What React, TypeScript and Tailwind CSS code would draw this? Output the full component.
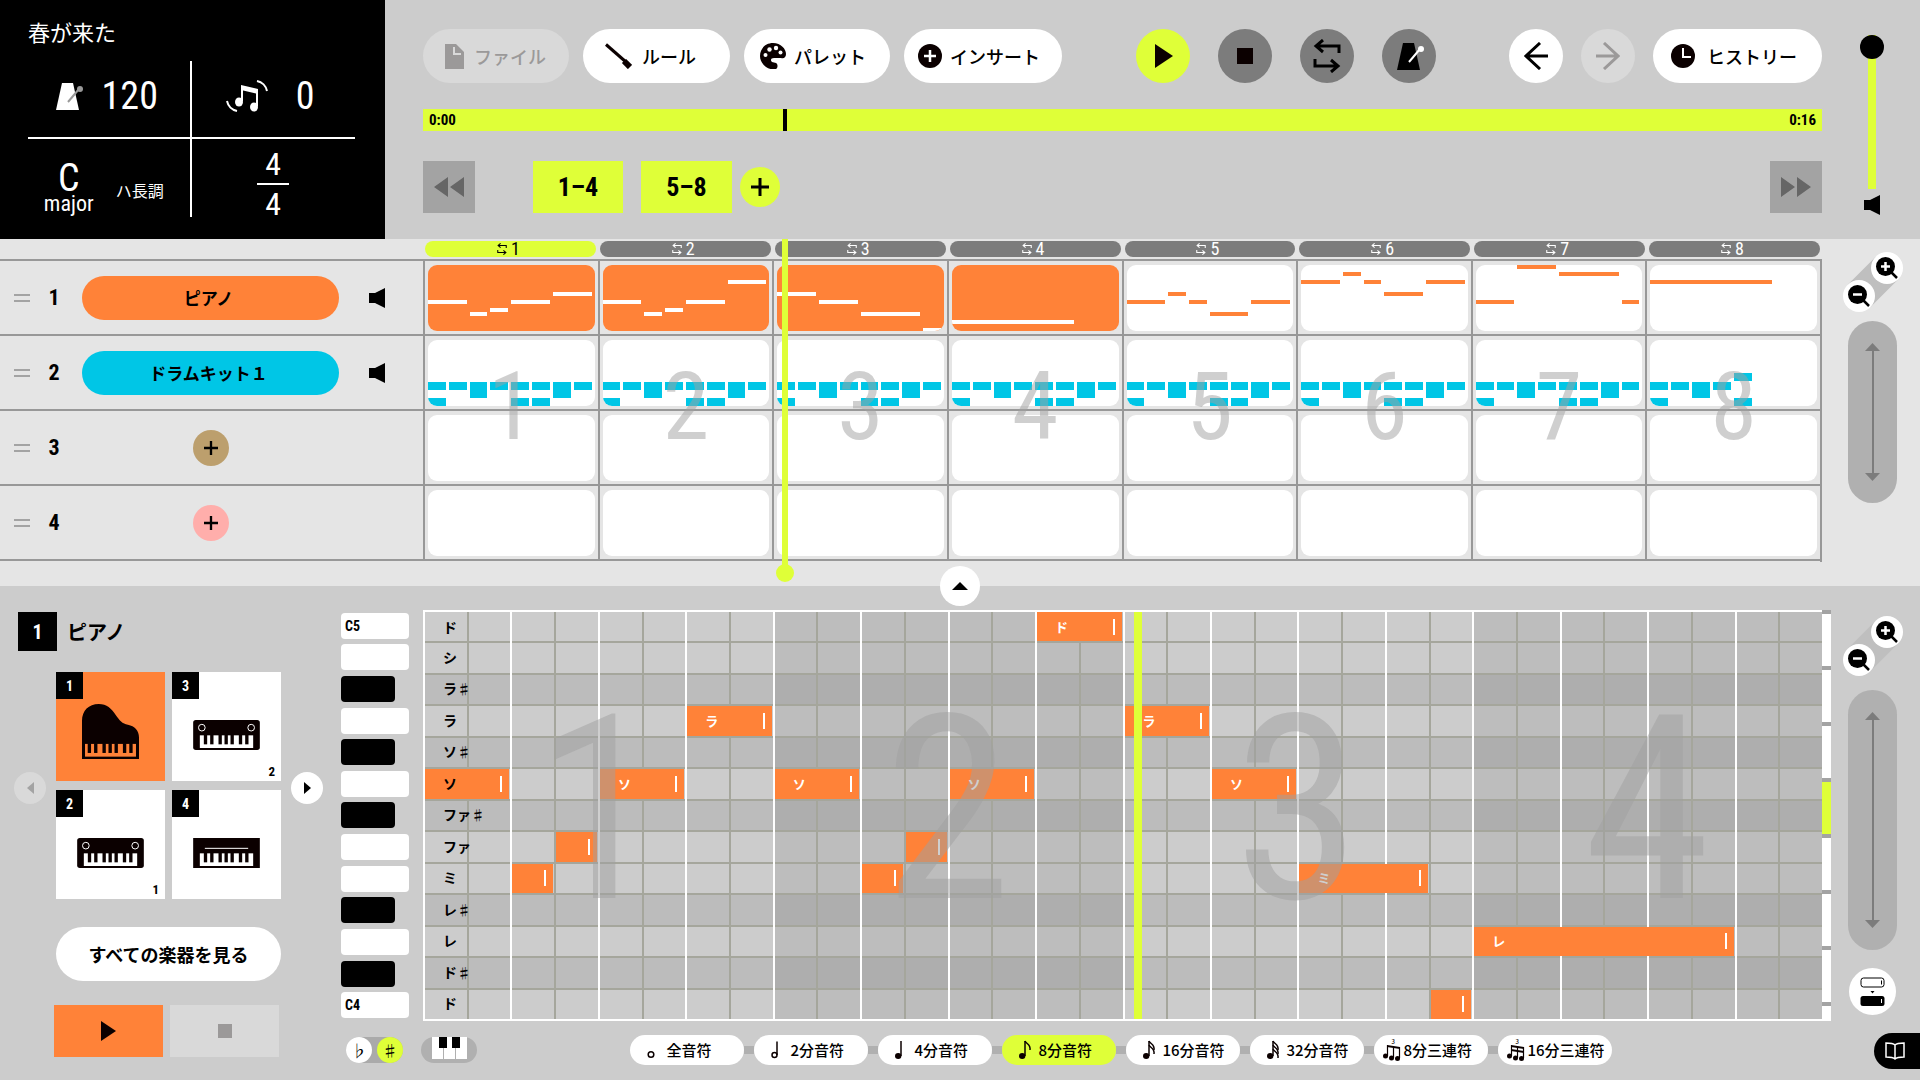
import { Fragment, type ReactNode } from "react";

const CJK = "font-['Noto_Sans_CJK_JP',sans-serif]";
const NUM = "font-['Liberation_Sans_Narrow','Roboto_Condensed','Noto_Sans_CJK_JP',sans-serif]";

/* ---------- icons ---------- */

function Loop({ className, w = 3 }: { className: string; w?: number }) {
  return (
    <svg viewBox="0 0 28 34" className={className} fill="none" stroke="currentColor" strokeWidth={w} aria-hidden="true">
      <path d="M26 14V7H3M10 1 3 7l7 6M2 20v7h23M18 21l7 6-7 6" />
    </svg>
  );
}

function Metronome({ className, stick }: { className: string; stick: string }) {
  return (
    <svg viewBox="0 0 28 27" className={className} aria-hidden="true">
      <path d="M6 0h11l6 27H0Z" fill="currentColor" />
      <path d="M12 19 23 6" stroke={stick} strokeWidth="2" />
      <circle cx="24" cy="6" r="3" fill={stick} />
    </svg>
  );
}

function MusicShake() {
  return (
    <svg viewBox="0 0 42 32" className="h-8 w-[42px]" fill="none" stroke="currentColor" strokeWidth="2" aria-hidden="true">
      <path d="M16 6v15M31 10v16" />
      <path d="M15 5 32 9v5L15 10Z" fill="currentColor" stroke="none" />
      <ellipse cx="13" cy="22" rx="4" ry="4.5" fill="currentColor" stroke="none" />
      <ellipse cx="28" cy="27" rx="4" ry="4.5" fill="currentColor" stroke="none" />
      <path d="M31 1c5 1 9 5 10 10M1 21c1 5 5 9 10 10" />
    </svg>
  );
}

function FileIcon() {
  return (
    <svg viewBox="0 0 19 25" className="h-[25px] w-[19px]" aria-hidden="true">
      <path d="M0 0h11l8 8v17H0Z" fill="#9b9999" />
      <path d="M9 3v7h7" fill="none" stroke="#d9d9d9" strokeWidth="2" />
    </svg>
  );
}

function Baton() {
  return (
    <svg viewBox="0 0 27 26" className="h-[26px] w-[27px]" stroke="#0b0000" aria-hidden="true">
      <path d="M1 1.500 21 19" strokeWidth="3" />
      <path d="m19 18 6 6" strokeWidth="6" />
    </svg>
  );
}

function Palette() {
  return (
    <svg viewBox="0 0 26 26" className="h-[26px] w-[26px]" aria-hidden="true">
      <path d="M13 0c8 0 13 6 13 11 0 3-2 5-5 4h-7c-3 0-4 2-2 4l4 1c2 1 2 5 0 6-3 1-7 0-10-2-4-3-6-7-6-11C0 5 6 0 13 0Z" fill="#0b0000" />
      <g fill="#fff">
        <circle cx="5.500" cy="12" r="2" />
        <circle cx="9.500" cy="6.500" r="2.200" />
        <circle cx="16" cy="5" r="2.200" />
        <circle cx="20.500" cy="9.500" r="2" />
      </g>
    </svg>
  );
}

function PlusDisc() {
  return (
    <svg viewBox="0 0 24 24" className="size-6" aria-hidden="true">
      <circle cx="12" cy="12" r="12" fill="#0b0000" />
      <path d="M12 6v12M6 12h12" stroke="#fff" strokeWidth="2.500" />
    </svg>
  );
}

function Clock() {
  return (
    <svg viewBox="0 0 24 24" className="size-6" aria-hidden="true">
      <circle cx="12" cy="12" r="12" fill="#0b0000" />
      <path d="M12 4v9h8" stroke="#fff" strokeWidth="2" fill="none" />
    </svg>
  );
}

function Arrow({ flip = false }: { flip?: boolean }) {
  return (
    <svg viewBox="0 0 24 28" className={flip ? "h-7 w-6 -scale-x-100" : "h-7 w-6"} fill="none" stroke="currentColor" strokeWidth="3" aria-hidden="true">
      <path d="M24 14H2M16 1 2 14l14 13" />
    </svg>
  );
}

function Triangle({ className, d = "M0 0v24l18-12Z", box = "0 0 18 24" }: { className: string; d?: string; box?: string }) {
  return (
    <svg viewBox={box} className={className} fill="currentColor" aria-hidden="true">
      <path d={d} />
    </svg>
  );
}

function Speaker({ className }: { className: string }) {
  return (
    <svg viewBox="0 0 16 20" className={className} fill="currentColor" aria-hidden="true">
      <path d="M0 5h6l10-5v20L6 15H0Z" />
    </svg>
  );
}

function Plus({ className }: { className: string }) {
  return (
    <svg viewBox="0 0 18 18" className={className} stroke="currentColor" strokeWidth="3" aria-hidden="true">
      <path d="M9 0v18M0 9h18" />
    </svg>
  );
}

function Magnifier({ plus = false }: { plus?: boolean }) {
  return (
    <svg viewBox="0 0 22 22" className="size-[22px]" aria-hidden="true">
      <circle cx="9.500" cy="9.500" r="9.500" fill="#000" />
      <path d="m14 14 7 7" stroke="#000" strokeWidth="2.500" />
      <path d={plus ? "M9.500 5v9M5 9.500h9" : "M5 9.500h9"} stroke="#fff" strokeWidth="2.500" />
    </svg>
  );
}

const BLACK_KEYS = [32, 51, 76, 94, 112, 137, 156];

function Synth({ knobs = false }: { knobs?: boolean }) {
  return (
    <svg viewBox="0 0 200 90" className="h-[30px] w-[67px]" aria-hidden="true">
      <rect width="200" height="90" rx={knobs ? 8 : 0} fill="#0b0000" />
      {knobs ? (
        <g fill="none" stroke="#fff" strokeWidth="3">
          <circle cx="26" cy="23" r="10" />
          <circle cx="174" cy="23" r="10" />
        </g>
      ) : (
        <path d="M35 31h130" stroke="#fff" strokeWidth="3" />
      )}
      <rect x="20" y="46" width="160" height="38" fill="#fff" />
      {BLACK_KEYS.map((x) => (
        <rect key={x} x={x} y="44" width="10" height="29" fill="#0b0000" />
      ))}
    </svg>
  );
}

function GrandPiano() {
  return (
    <svg viewBox="0 0 170 164" className="h-[55px] w-[57px]" aria-hidden="true">
      <path d="M0 164V50C0 20 20 0 50 0c24 0 38 14 50 32 12 17 20 27 37 30 20 4 33 18 33 38v64Z" fill="#0b0000" />
      <rect x="9" y="119" width="152" height="38" fill="#ff8238" />
      {BLACK_KEYS.map((x) => (
        <rect key={x} x={x - 15} y="117" width="10" height="29" fill="#0b0000" />
      ))}
    </svg>
  );
}

function NoteGlyph({ kind }: { kind: number }) {
  if (kind >= 6) {
    return (
      <svg viewBox="0 0 18 22" className="h-[22px] w-[18px] shrink-0 overflow-visible" aria-hidden="true">
        <g fill="#0b0000">
          <circle cx="2.500" cy="17" r="2.500" />
          <circle cx="8.500" cy="19" r="2.500" />
          <circle cx="14.500" cy="19.500" r="2.500" />
          <path d="m4 6 13 2v2L4 8Z" />
          {kind === 7 && <path d="m4 10 13 2v2L4 12Z" />}
        </g>
        <path d="M4.500 6v11M10.500 7v12M16.500 8v11" stroke="#0b0000" strokeWidth="1.200" />
        <text x="8.500" y="5" fontSize="6" fill="#0b0000">3</text>
      </svg>
    );
  }
  return (
    <svg viewBox="0 0 24 22" className="h-[22px] w-6 shrink-0" fill="none" stroke="#0b0000" strokeWidth="1.500" aria-hidden="true">
      {kind === 0 && <circle cx="11" cy="15.500" r="2.800" />}
      {kind === 1 && <path d="M13 2.500V16" />}
      {kind === 1 && <circle cx="10.500" cy="16" r="2.500" />}
      {kind >= 2 && <path d="M13 2v15" />}
      {kind >= 2 && <ellipse cx="10.200" cy="17" rx="3.200" ry="3" fill="#0b0000" stroke="none" />}
      {kind >= 3 && <path d="M13 2c1 3 6 3 5 9" />}
      {kind >= 4 && <path d="M13 6c1 3 6 3 5 9" />}
      {kind >= 5 && <path d="M13 10c1 3 6 3 5 9" />}
    </svg>
  );
}

/* ---------- data ---------- */

type Note = [start: number, length: number, semitone: number];

const MELODY: Note[][] = [
  [[0, 2, 7], [2, 1, 4], [3, 1, 5], [4, 2, 7], [6, 2, 9]],
  [[0, 2, 7], [2, 1, 4], [3, 1, 5], [4, 2, 7], [6, 2, 12]],
  [[0, 2, 9], [2, 2, 7], [4, 3, 4], [7, 1, 0]],
  [[0, 6, 2]],
  [[0, 2, 7], [2, 1, 9], [3, 1, 7], [4, 2, 4], [6, 2, 7]],
  [[0, 2, 12], [2, 1, 14], [3, 1, 12], [4, 2, 9], [6, 2, 12]],
  [[0, 2, 7], [2, 2, 16], [4, 3, 14], [7, 1, 7]],
  [[0, 6, 12]],
];

// [slot, top, height] in a drum cell
const BEAT: [number, number, number][] = [
  [0, 42, 8], [1, 42, 8], [2, 42, 16], [3, 42, 8], [4, 42, 8], [5, 42, 8], [6, 42, 16], [7, 42, 8],
  [0, 58, 8], [4, 58, 8], [5, 58, 8],
];
const LAST_BEAT: [number, number, number][] = [
  [0, 42, 8], [1, 42, 8], [2, 42, 16], [3, 42, 8], [4, 33, 8], [0, 58, 8], [4, 58, 8],
];

const SCALE = ["ド", "シ", "ラ♯", "ラ", "ソ♯", "ソ", "ファ♯", "ファ", "ミ", "レ♯", "レ", "ド♯", "ド"];
const LENGTHS = ["全音符", "2分音符", "4分音符", "8分音符", "16分音符", "32分音符", "8分三連符", "16分三連符"];
const TRACKS = [
  { name: "ピアノ", color: "bg-[#ff8238]" },
  { name: "ドラムキット１", color: "bg-[#00c6e6]" },
  { color: "bg-[#bc9f6d]" },
  { color: "bg-[#ffaeab]" },
];

/* ---------- pieces ---------- */

function Pill({ children, className = "bg-white", disabled = false }: { children: ReactNode; className?: string; disabled?: boolean }) {
  return (
    <button disabled={disabled} className={`flex h-[54px] items-center rounded-full text-lg font-medium whitespace-nowrap ${className}`}>
      {children}
    </button>
  );
}

function Round({ children, label, className, disabled = false }: { children: ReactNode; label: string; className: string; disabled?: boolean }) {
  return (
    <button aria-label={label} disabled={disabled} className={`flex shrink-0 items-center justify-center rounded-full ${className}`}>
      {children}
    </button>
  );
}

function ZoomPair({ target }: { target: string }) {
  return (
    <div className="relative h-[60px] w-[60px]">
      <svg viewBox="0 0 60 60" className="absolute inset-0" aria-hidden="true">
        <path d="M16 44 44 16" stroke="#bfbfbf" strokeWidth="32" />
      </svg>
      <Round label={`${target}を拡大`} className="absolute top-0 right-0 size-8 bg-white"><Magnifier plus /></Round>
      <Round label={`${target}を縮小`} className="absolute bottom-0 left-0 size-8 bg-white"><Magnifier /></Round>
    </div>
  );
}

function ScrollPill({ className }: { className: string }) {
  return (
    <div className={`flex w-[49px] flex-col items-center rounded-full bg-[#b0b0b0] py-[22px] text-[#7c7c7c] ${className}`}>
      <Triangle className="h-2 w-[15px]" box="0 0 15 8" d="M7.500 0 15 8H0Z" />
      <div className="w-[2px] flex-1 bg-current" />
      <Triangle className="h-2 w-[15px]" box="0 0 15 8" d="M0 0h15L7.500 8Z" />
    </div>
  );
}

function Header() {
  return (
    <header className="flex bg-[#ccc]">
      <section className="w-[385px] shrink-0 bg-black pt-[14px] pr-[30px] pb-[22px] pl-7 text-white">
        <h1 className="text-[22px] leading-[34px]">春が来た</h1>
        <div className={`mt-[13px] grid grid-cols-2 grid-rows-[78px_78px] ${NUM}`}>
          <div className="flex items-center justify-center gap-[18px] border-r-2 border-b-2 border-white pr-1 pb-[6px]">
            <Metronome className="h-[27px] w-7" stick="#999" />
            <span className="text-[38px] leading-8">120</span>
          </div>
          <div className="flex items-center justify-center gap-7 border-b-2 border-white pr-[6px] pb-[6px]">
            <MusicShake />
            <span className="text-[38px] leading-8">0</span>
          </div>
          <div className="flex items-center justify-center gap-[22px] border-r-2 border-white pt-6 pr-[10px]">
            <div className="flex flex-col items-center">
              <span className="text-[38px] leading-7">C</span>
              <span className="text-[22px] leading-6">major</span>
            </div>
            <span className={`text-base ${CJK}`}>ハ長調</span>
          </div>
          <div className="flex flex-col items-center justify-center pt-3 text-[32px] leading-[38px]">
            <span>4</span>
            <div className="h-[2px] w-8 shrink-0 bg-white" />
            <span>4</span>
          </div>
        </div>
      </section>

      <div className="flex min-w-0 flex-1 flex-col pt-[29px] pl-[38px]">
        <div className="flex items-center justify-between">
          <div className="flex gap-[14px]">
            <Pill disabled className="w-[146px] gap-[10px] bg-[#d9d9d9] pl-[22px] text-[#9b9999]"><FileIcon />ファイル</Pill>
            <Pill className="w-[147px] gap-[10px] bg-white pl-[22px]"><Baton />ルール</Pill>
            <Pill className="w-[146px] gap-2 bg-white pl-4"><Palette />パレット</Pill>
            <Pill className="w-[158px] gap-2 bg-white pl-[14px]"><PlusDisc />インサート</Pill>
          </div>
          <div className="flex gap-7">
            <Round label="再生" className="size-[54px] bg-[#dfff38] pl-[2px] text-[#0b0000]"><Triangle className="h-6 w-[18px]" /></Round>
            <Round label="停止" className="size-[54px] bg-[#7c7c7c]"><span className="size-4 bg-[#0b0000]" /></Round>
            <Round label="ループ" className="size-[54px] bg-[#7c7c7c]"><Loop className="h-[34px] w-7" /></Round>
            <Round label="メトロノーム" className="size-[54px] bg-[#7c7c7c] pl-1"><Metronome className="h-[27px] w-7" stick="#fff" /></Round>
          </div>
          <div className="flex gap-[18px]">
            <Round label="元に戻す" className="size-[54px] bg-white"><Arrow /></Round>
            <Round label="やり直す" disabled className="size-[54px] bg-[#d9d9d9] text-[#9b9999]"><Arrow flip /></Round>
            <Pill className="w-[169px] gap-3 bg-white pl-[18px]"><Clock />ヒストリー</Pill>
          </div>
        </div>

        <div className="relative mt-[26px] h-[22px]">
          <input
            type="range"
            aria-label="再生位置"
            max={1000}
            defaultValue={258}
            className="block h-[22px] w-full appearance-none bg-[#dfff38] [&::-webkit-slider-thumb]:h-[22px] [&::-webkit-slider-thumb]:w-1 [&::-webkit-slider-thumb]:appearance-none [&::-webkit-slider-thumb]:bg-black"
          />
          <div className={`pointer-events-none absolute inset-0 flex items-center justify-between px-[6px] text-[15px] leading-5 font-bold ${NUM}`}>
            <span>0:00</span>
            <span>0:16</span>
          </div>
        </div>

        <div className="mt-[30px] flex items-center">
          <button aria-label="前へ" className="flex h-[52px] w-[52px] items-center justify-center bg-[#a3a3a3] text-[#666]">
            <Triangle className="h-5 w-[30px]" box="0 0 30 20" d="M14 0v20L0 10ZM30 0v20L16 10Z" />
          </button>
          <div className={`ml-[58px] flex items-center text-[26px] font-bold ${NUM}`}>
            <button className="h-[52px] w-[90px] bg-[#dfff38]">1–4</button>
            <button className="ml-[18px] h-[52px] w-[91px] bg-[#dfff38]">5–8</button>
            <Round label="セクションを追加" className="ml-2 size-10 bg-[#dfff38]"><Plus className="size-[18px]" /></Round>
          </div>
          <button aria-label="次へ" className="ml-auto flex h-[52px] w-[52px] items-center justify-center bg-[#a3a3a3] text-[#666]">
            <Triangle className="h-5 w-[30px]" box="0 0 30 20" d="M0 0v20l14-10ZM16 0v20l14-10Z" />
          </button>
        </div>
      </div>

      <div className="flex w-[98px] shrink-0 flex-col items-center pt-[35px] pl-[2px]">
        <input
          type="range"
          aria-label="音量"
          defaultValue={100}
          className="h-[154px] w-6 appearance-none bg-[linear-gradient(#dfff38,#dfff38)] bg-[length:8px_100%] bg-center bg-no-repeat [direction:rtl] [writing-mode:vertical-lr] [&::-webkit-slider-thumb]:size-6 [&::-webkit-slider-thumb]:appearance-none [&::-webkit-slider-thumb]:rounded-full [&::-webkit-slider-thumb]:bg-black"
        />
        <Speaker className="mt-[6px] h-5 w-4" />
      </div>
    </header>
  );
}

function Cell({ bar, track }: { bar: number; track: number }) {
  const filled = track === 0 && bar < 4;
  return (
    <div className="h-[75px] border-b-2 border-[#989898] px-[3px] pt-1">
      <div className={`relative h-[66px] overflow-hidden rounded-[9px] ${filled ? "bg-[#ff8238]" : "bg-white"}`}>
        {track === 0 &&
          MELODY[bar].map(([start, len, semi]) => (
            <div
              key={start}
              className={`absolute h-1 ${filled ? "bg-white" : "bg-[#ff8238]"}`}
              style={{ left: `${start * 12.5}%`, width: `calc(${len * 12.5}% - 3px)`, top: Math.max(0, 63 - semi * 4) }}
            />
          ))}
        {track === 1 &&
          (bar === 7 ? LAST_BEAT : BEAT).map(([slot, top, height]) => (
            <div key={`${slot}-${top}`} className="absolute bg-[#00c6e6]" style={{ left: `${slot * 12.5}%`, width: "calc(12.5% - 3px)", top, height }} />
          ))}
      </div>
    </div>
  );
}

function Arrangement() {
  return (
    <section className="relative flex bg-[#e5e5e5] pb-6">
      <div className="w-[423px] shrink-0">
        <div className="h-[22px] border-b-2 border-[#989898]" />
        {TRACKS.map((t, i) => (
          <div key={i} className="flex h-[75px] items-center border-b-2 border-[#989898] pl-[14px]">
            <div className="h-2 w-4 border-y-2 border-[#a3a3a3]" />
            <span className={`w-12 text-center text-[22px] font-bold ${NUM}`}>{i + 1}</span>
            <div className="ml-1 flex w-[257px] justify-center">
              {t.name ? (
                <button className={`h-11 w-full rounded-full pr-1 text-[17px] font-bold ${t.color}`}>{t.name}</button>
              ) : (
                <Round label={`トラック${i + 1}を追加`} className={`size-9 ${t.color}`}><Plus className="size-[14px]" /></Round>
              )}
            </div>
            {t.name && (
              <button aria-label={`${t.name}をミュート`} className="ml-[30px]"><Speaker className="h-5 w-4" /></button>
            )}
          </div>
        ))}
      </div>

      <div className="relative min-w-0 flex-1">
        <div className="grid h-[22px] grid-cols-8 border-b-2 border-[#989898] pt-[2px]">
          {MELODY.map((_, i) => (
            <button
              key={i}
              className={`mr-[2px] ml-[2px] flex h-4 items-center justify-center gap-1 rounded-full pr-1 text-lg leading-4 ${NUM} ${i === 0 ? "bg-[#dfff38]" : "bg-[#7c7c7c] text-white"}`}
            >
              <Loop className="h-3 w-[10px]" />
              {i + 1}
            </button>
          ))}
        </div>
        <div className="grid grid-cols-8 border-r-2 border-[#989898] pb-[1px]">
          {MELODY.map((_, bar) => (
            <div key={bar} className="relative border-l-2 border-[#989898]">
              {TRACKS.map((_, t) => (
                <Cell key={t} bar={bar} track={t} />
              ))}
              <div className={`pointer-events-none absolute inset-x-0 top-24 text-center text-[94px] leading-[100px] text-[#a0a0a0]/50 ${NUM}`}>{bar + 1}</div>
            </div>
          ))}
        </div>
        <div className="absolute top-0 -bottom-5 left-[25.900%] flex w-[18px] -translate-x-[9px] flex-col items-center">
          <div className="w-[6px] flex-1 bg-[#dfff38]" />
          <div className="-mt-1 size-[18px] rounded-full bg-[#dfff38]" />
        </div>
      </div>

      <div className="flex w-[98px] shrink-0 flex-col items-center pt-[13px] pl-[3px]">
        <ZoomPair target="トラック" />
        <ScrollPill className="mt-[9px] h-[182px]" />
      </div>

      <div className="absolute inset-x-0 -bottom-5 z-10 flex justify-center">
        <Round label="折りたたむ" className="size-10 bg-white"><Triangle className="h-2 w-4" box="0 0 16 8" d="M8 0l8 8H0Z" /></Round>
      </div>
    </section>
  );
}

function Instruments() {
  const tiles = [1, 3, 2, 4];
  return (
    <aside className="w-[341px] shrink-0 pt-[26px]">
      <div className="flex items-center gap-[10px] pl-[18px]">
        <div className={`flex size-[39px] items-center justify-center bg-black text-xl font-bold text-white ${NUM}`}>1</div>
        <h2 className="text-xl font-bold">ピアノ</h2>
      </div>
      <div className="mt-[21px] flex items-center pl-[14px]">
        <Round label="前の楽器" disabled className="mt-1 size-8 bg-[#d9d9d9] text-[#a3a3a3]"><Triangle className="h-3 w-[7px] -scale-x-100" box="0 0 7 12" d="M0 0v12l7-6Z" /></Round>
        <div className="ml-[10px] grid grid-cols-2 gap-x-[7px] gap-y-[9px]">
          {tiles.map((n) => (
            <button key={n} className={`relative flex size-[109px] items-center justify-center ${n === 1 ? "bg-[#ff8238] pt-[10px]" : "bg-white pt-4"}`}>
              <span className={`absolute top-0 left-0 flex size-[27px] items-center justify-center bg-black text-sm font-bold text-white ${NUM}`}>{n}</span>
              {n === 1 ? <GrandPiano /> : <Synth knobs={n !== 4} />}
              {(n === 2 || n === 3) && <span className={`absolute right-[6px] bottom-0 text-[13px] font-bold ${NUM}`}>{n - 1}</span>}
            </button>
          ))}
        </div>
        <Round label="次の楽器" className="mt-1 ml-[10px] size-8 bg-white"><Triangle className="h-3 w-[7px]" box="0 0 7 12" d="M0 0v12l7-6Z" /></Round>
      </div>
      <button className="mt-7 ml-14 h-[54px] w-[225px] rounded-full bg-white text-lg font-bold">すべての楽器を見る</button>
      <div className="mt-6 ml-[54px] flex gap-[7px]">
        <button aria-label="試聴" className="flex h-[52px] w-[109px] items-center justify-center bg-[#ff8238] text-[#0b0000]"><Triangle className="h-5 w-[15px]" box="0 0 15 20" d="M0 0v20l15-10Z" /></button>
        <button aria-label="試聴を停止" disabled className="flex h-[52px] w-[109px] items-center justify-center bg-[#d9d9d9]"><span className="size-[14px] bg-[#9b9999]" /></button>
      </div>
    </aside>
  );
}

const KEY_ROWS = "grid-rows-[repeat(13,minmax(0,1fr))]";
const ROLL_ROWS = "grid-rows-[29px_repeat(12,minmax(0,1fr))]";

function Keys() {
  return (
    <div className={`grid h-[411px] w-[68px] shrink-0 items-center ${KEY_ROWS}`}>
      {SCALE.map((s, i) => (
        <button
          key={i}
          aria-label={`鍵盤 ${s}`}
          className={`h-[26px] rounded text-left ${s.includes("♯") ? "w-[54px] bg-black" : "w-full bg-white pl-1 text-sm leading-[26px] font-bold"} ${NUM}`}
        >
          {i === 0 ? "C5" : i === 12 ? "C4" : ""}
        </button>
      ))}
    </div>
  );
}

function Roll() {
  const notes = MELODY.slice(0, 4).flatMap((bar, b) => bar.map(([s, l, p]) => ({ start: b * 8 + s, len: l, row: 12 - p })));
  return (
    <div className="relative grid h-[411px] min-w-0 flex-1 overflow-hidden border-y-2 border-white">
      <div className="grid grid-cols-4 [grid-area:1/1]">
        {[0, 1, 2, 3].map((b) => (
          <div key={b} className={b % 2 ? "bg-[#bdbdbd]" : "bg-[#ccc]"} />
        ))}
      </div>
      <div className={`grid [grid-area:1/1] ${ROLL_ROWS}`}>
        {SCALE.map((s, i) => (
          <div key={i} className={`${i ? "border-t-2 border-[#a5a69c]" : ""} ${s.includes("♯") ? "bg-black/8" : ""}`} />
        ))}
      </div>
      <div className="grid grid-cols-[repeat(32,minmax(0,1fr))] [grid-area:1/1]">
        {Array.from({ length: 32 }, (_, i) => (
          <div key={i} className={i % 2 ? "border-l-2 border-[#a5a69c]" : "border-l-2 border-white"} />
        ))}
      </div>
      <div className={`grid grid-cols-[repeat(32,minmax(0,1fr))] [grid-area:1/1] ${ROLL_ROWS}`}>
        {notes.map((n) => (
          <div
            key={n.start}
            className={`mr-[1px] ml-[2px] flex items-center justify-between bg-[#ff8238] pr-[7px] pl-[18px] text-[13px] leading-4 font-bold text-white ${n.row ? "mt-[2px]" : ""}`}
            style={{ gridColumn: `${n.start + 1} / span ${n.len}`, gridRow: n.row + 1 }}
          >
            <span>{n.len > 1 && n.start > 0 ? SCALE[n.row] : ""}</span>
            <span className="h-4 w-[2px] bg-white" />
          </div>
        ))}
      </div>
      <div className={`pointer-events-none grid items-center pl-5 text-sm leading-5 font-bold [grid-area:1/1] ${ROLL_ROWS}`}>
        {SCALE.map((s, i) => (
          <span key={i}>{s}</span>
        ))}
      </div>
      <div className={`pointer-events-none grid min-h-0 grid-cols-4 items-center pb-3 text-center text-[258px] leading-none text-[#a0a0a0]/50 [grid-area:1/1] ${NUM}`}>
        {[1, 2, 3, 4].map((n) => (
          <span key={n}>{n}</span>
        ))}
      </div>
      <div className="absolute -top-[2px] -bottom-[2px] left-[50.800%] w-2 bg-[#dfff38]" />
    </div>
  );
}

function Minimap() {
  return (
    <div className="flex h-[411px] w-[9px] shrink-0 flex-col bg-white">
      {Array.from({ length: 8 }, (_, i) => (
        <div key={i} className={`border-t-4 border-[#a3a3a3] ${i === 7 ? "flex-1" : "h-14"} ${i === 3 ? "bg-[#dfff38]" : ""}`} />
      ))}
    </div>
  );
}

function Toolbar() {
  return (
    <div className="flex items-center pt-[14px]">
      <div className="ml-[5px] flex w-[57px] items-center justify-between rounded-full bg-[#aaa] text-base">
        <button className="size-[26px] rounded-full bg-white leading-[26px]">♭</button>
        <button className="size-[26px] rounded-full bg-[#dfff38] leading-[26px]">♯</button>
      </div>
      <button aria-label="鍵盤表示" className="ml-[18px] flex h-[26px] w-14 items-start justify-center rounded-full bg-[#b0b0b0]">
        <svg viewBox="0 0 35 22" className="h-[22px] w-[35px]" aria-hidden="true">
          <path d="M0 0h11v22H0ZM12 0h11v22H12ZM24 0h11v22H24Z" fill="#fff" />
          <path d="M7 0h8v11H7ZM20 0h8v11h-8Z" />
        </svg>
      </button>
      <div className="flex flex-1 items-center justify-center pr-[58px]">
        {LENGTHS.map((name, i) => (
          <Fragment key={name}>
            {i > 0 && <div className="h-2 w-[10px] bg-[#b0b0b0]" />}
            <button
              className={`flex h-[30px] w-[114px] items-center rounded-full text-[15px] font-medium whitespace-nowrap ${i >= 6 ? "gap-[3px] pl-[9px]" : "gap-[3px] pl-[10px]"} ${i === 3 ? "bg-[#dfff38]" : "bg-white"}`}
            >
              <NoteGlyph kind={i} />
              {name}
            </button>
          </Fragment>
        ))}
      </div>
    </div>
  );
}

function Editor() {
  return (
    <section className="flex flex-1 bg-[#ccc]">
      <Instruments />
      <div className="flex min-w-0 flex-1 flex-col pt-6">
        <div className="flex">
          <Keys />
          <div className="w-[14px]" />
          <Roll />
        </div>
        <Toolbar />
      </div>
      <div className="flex w-[98px] shrink-0 pt-6">
        <Minimap />
        <div className="flex flex-1 flex-col items-center">
          <div className="flex flex-col items-center pr-[6px]">
            <div className="mt-[6px]"><ZoomPair target="ノート" /></div>
            <ScrollPill className="mt-[14px] h-[260px]" />
            <Round label="音名表示を切り替え" className="mt-[18px] size-[47px] bg-white">
              <svg viewBox="0 0 26 30" className="h-[30px] w-[26px]" aria-hidden="true">
                <rect x="1" y="1" width="23" height="9" rx="2.500" fill="#fff" stroke="#000" />
                <path d="M21.500 3.500v4" stroke="#000" />
                <path d="M10.500 14h4l-2 2.500Z" />
                <rect x="0.500" y="19" width="24" height="10" rx="2.500" />
                <path d="M21.500 22v4" stroke="#fff" />
              </svg>
            </Round>
          </div>
          <button aria-label="ガイド" className="mt-[18px] flex h-9 w-[46px] items-center self-end rounded-l-full bg-black pl-[11px]">
            <svg viewBox="0 0 20 18" className="h-[18px] w-5" fill="none" stroke="#fff" strokeWidth="1.500" aria-hidden="true">
              <path d="M10 3C8 1 5 1 1 1v14c4 0 7 0 9 2 2-2 5-2 9-2V1c-4 0-7 0-9 2ZM10 3v14" />
            </svg>
          </button>
        </div>
      </div>
    </section>
  );
}

export default function App() {
  return (
    <div className={`flex min-h-screen flex-col text-black ${CJK}`}>
      <Header />
      <Arrangement />
      <Editor />
    </div>
  );
}
